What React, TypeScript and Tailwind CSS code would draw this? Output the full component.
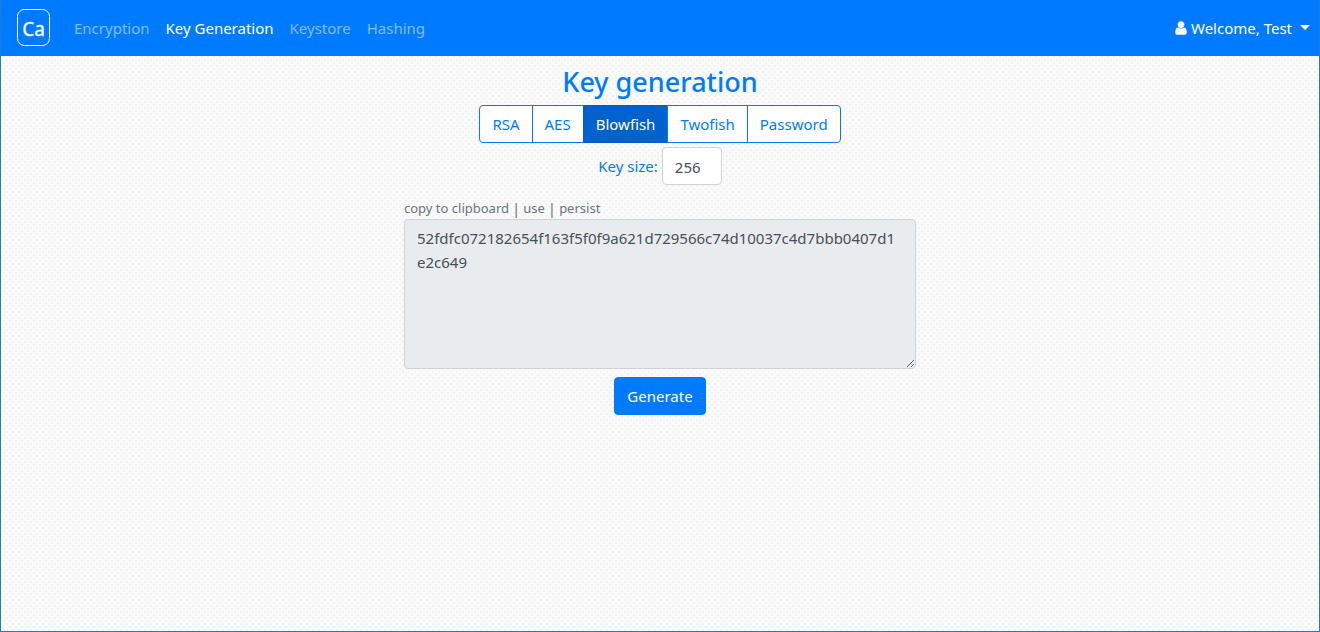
import { useState } from "react";

const links = ["Encryption", "Key Generation", "Keystore", "Hashing"];
const algorithms = ["RSA", "AES", "Blowfish", "Twofish", "Password"];
const generatedKey = "52fdfc072182654f163f5f0f9a621d729566c74d10037c4d7bbb0407d1e2c649";

function UserIcon() {
  return (
    <svg viewBox="256 0 1280 1792" fill="currentColor" aria-hidden="true" className="mr-1 h-4 w-3">
      <path d="M1536 1399q0 109-62.5 187t-150.5 78h-854q-88 0-150.5-78t-62.5-187q0-85 8.5-160.5t31.5-152 58.5-131 94-89 134.5-34.5q131 128 313 128t313-128q76 0 134.5 34.5t94 89 58.5 131 31.5 152 8.5 160.5zm-256-887q0 159-112.5 271.5t-271.5 112.5-271.5-112.5-112.5-271.5 112.5-271.5 271.5-112.5 271.5 112.5 112.5 271.5z" />
    </svg>
  );
}

function Navbar() {
  return (
    <nav className="flex h-14 items-center bg-[#007bff] pr-[9px] pl-4 text-white">
      <a href="#" aria-label="Home" className="mr-4 mb-0.5 flex">
        <svg width="33" height="37" viewBox="0 0 33 37" aria-hidden="true">
          <rect x="0.5" y="0.5" width="32" height="36" rx="7" fill="none" stroke="white" />
          <text x="16.5" y="27" textAnchor="middle" fill="white" stroke="white" strokeWidth="0.3" fontSize="19">Ca</text>
        </svg>
      </a>
      <ul className="flex">
        {links.map((link) => (
          <li key={link}>
            <a
              href="#"
              className={
                link === "Key Generation" ? "block px-2 py-2 text-white" : "block px-2 py-2 text-white/50"
              }
            >
              {link}
            </a>
          </li>
        ))}
      </ul>
      <button type="button" className="ml-auto flex items-center">
        <UserIcon />
        Welcome, Test
        <span className="mb-0.5 ml-2 border-x-5 border-t-5 border-x-transparent border-t-white" />
      </button>
    </nav>
  );
}

export default function App() {
  const [algorithm, setAlgorithm] = useState("Blowfish");
  const [keySize, setKeySize] = useState("256");

  return (
    <div className="min-h-screen border border-t-0 border-[#1c7cd5] bg-[#fafafa] bg-[radial-gradient(#f2f2f2_1px,transparent_1px),radial-gradient(#f2f2f2_1px,transparent_1px)] bg-[size:6px_6px] bg-[position:0_0,3px_3px] font-['Noto_Sans',sans-serif] text-[15px] leading-6">
      <Navbar />
      <main className="flex flex-col items-center px-4 pt-2 text-[#007bff]">
        <h1 className="mb-[5px] text-[27px] leading-9 font-medium">Key generation</h1>
        <div className="flex">
          {algorithms.map((name) => (
            <button
              key={name}
              type="button"
              onClick={() => setAlgorithm(name)}
              className={
                name === algorithm
                  ? "-ml-px border border-[#005cbf] bg-[#0062cc] px-3 py-1.5 text-white first:ml-0 first:rounded-l last:rounded-r"
                  : "-ml-px border border-[#007bff] bg-white px-3 py-1.5 first:ml-0 first:rounded-l last:rounded-r"
              }
            >
              {name}
            </button>
          ))}
        </div>
        <div className="mt-1 flex items-center gap-1">
          <label htmlFor="key-size">Key size:</label>
          <input
            id="key-size"
            value={keySize}
            onChange={(e) => setKeySize(e.target.value)}
            className="h-[38px] w-[60px] rounded border border-[#ced4da] bg-white px-3 pt-0.5 text-[#495057]"
          />
        </div>
        <div className="mt-[11px] w-full max-w-lg">
          <div className="flex items-center gap-[3px] text-[13px] leading-6 text-[#6c757d]">
            <button type="button">copy to clipboard</button>
            <span className="text-[15px]">|</span>
            <button type="button">use</button>
            <span className="text-[15px]">|</span>
            <button type="button">persist</button>
          </div>
          <textarea
            aria-label="Generated key"
            readOnly
            rows={5}
            value={generatedKey}
            className="-mt-px block h-[150px] w-full resize rounded border border-[#ced4da] bg-[#e9ecef] px-3 py-1.5 text-[#495057]"
          />
        </div>
        <button type="button" className="mt-2 rounded border border-[#007bff] bg-[#007bff] px-3 py-1.5 text-white">
          Generate
        </button>
      </main>
    </div>
  );
}
